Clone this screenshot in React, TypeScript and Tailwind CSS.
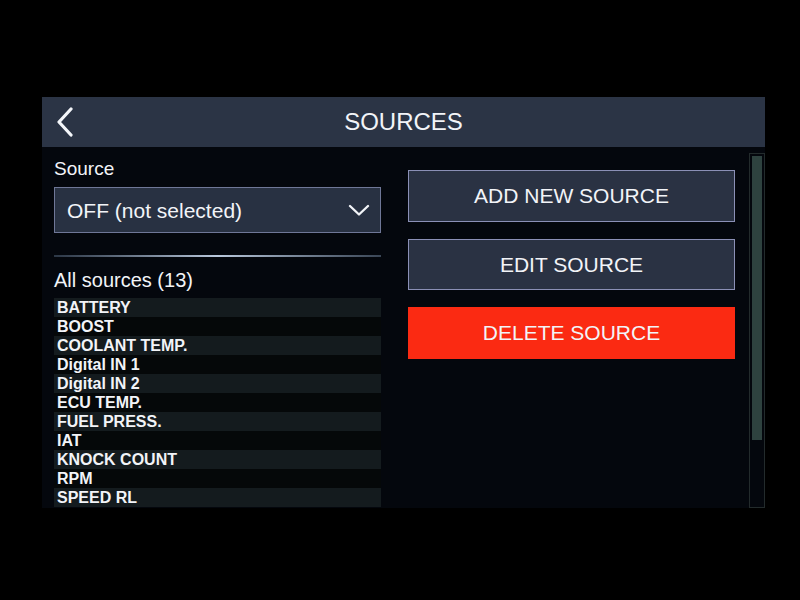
import React from "react";

const sources = [
  "BATTERY",
  "BOOST",
  "COOLANT TEMP.",
  "Digital IN 1",
  "Digital IN 2",
  "ECU TEMP.",
  "FUEL PRESS.",
  "IAT",
  "KNOCK COUNT",
  "RPM",
  "SPEED RL",
];

const App = () => {
  return (
    <div className="w-[800px] h-[600px] bg-black pt-[97px] pl-[42px] font-['Liberation_Sans',Arial,sans-serif] text-[#f2f4f8]">
      <div className="w-[723px] h-[411px] flex flex-col bg-[#04070d]">
        {/* header */}
        <div className="h-[50px] shrink-0 bg-[#2b3445] flex items-center relative">
          <svg className="absolute left-[13px] top-[10px]" width="20" height="30" viewBox="0 0 20 30">
            <path d="M16 2 L4 15 L16 28" fill="none" stroke="#f4f6fa" strokeWidth="3.2" strokeLinecap="round" strokeLinejoin="round" />
          </svg>
          <div className="w-full text-center text-[24px] leading-none">SOURCES</div>
        </div>

        {/* body */}
        <div className="flex flex-row h-[361px]">
          <div className="w-[339px] pl-[12px] pt-[11px] flex flex-col">
            <div className="text-[19px] leading-[22px]">Source</div>
            <div className="mt-[7px] h-[46px] bg-[#283142] border border-[#6f7797] flex items-center justify-between pl-[12px] pr-[10px]">
              <span className="text-[21px] leading-none">OFF (not selected)</span>
              <svg width="22" height="12" viewBox="0 0 22 12">
                <path d="M2 2 L11 10.5 L20 2" fill="none" stroke="#f2f4f8" strokeWidth="2.3" strokeLinecap="round" strokeLinejoin="round" />
              </svg>
            </div>
            <div className="mt-[22px] h-[2px] bg-gradient-to-r from-[#2c3746] via-[#b9c8dc] to-[#3a4656]" />
            <div className="mt-[11px] text-[20px] leading-[24px]">All sources (13)</div>
            <div className="mt-[6px] flex flex-col">
              {sources.map((s, i) => (
                <div
                  key={s}
                  className={
                    "h-[19px] pl-[3px] text-[16px] font-bold leading-[19px] " +
                    (i % 2 === 0 ? "bg-[#141b1e]" : "bg-[#050809]")
                  }
                >
                  {s}
                </div>
              ))}
            </div>
          </div>

          <div className="w-[327px] ml-[27px] pt-[23px] flex flex-col gap-[17px]">
            <div className="h-[52px] bg-[#2a3243] border border-[#8b90b6] flex items-center justify-center text-[21px]">
              ADD NEW SOURCE
            </div>
            <div className="h-[51px] bg-[#2a3243] border border-[#8b90b6] flex items-center justify-center text-[21px]">
              EDIT SOURCE
            </div>
            <div className="h-[52px] bg-[#fb2a12] flex items-center justify-center text-[21px]">
              DELETE SOURCE
            </div>
          </div>

          <div className="ml-[14px] mt-[6px] w-[16px] h-[355px] border border-[#232b2c] p-[2px]">
            <div className="h-[284px] bg-[#2e423f]" />
          </div>
        </div>
      </div>
    </div>
  );
};

export default App;
